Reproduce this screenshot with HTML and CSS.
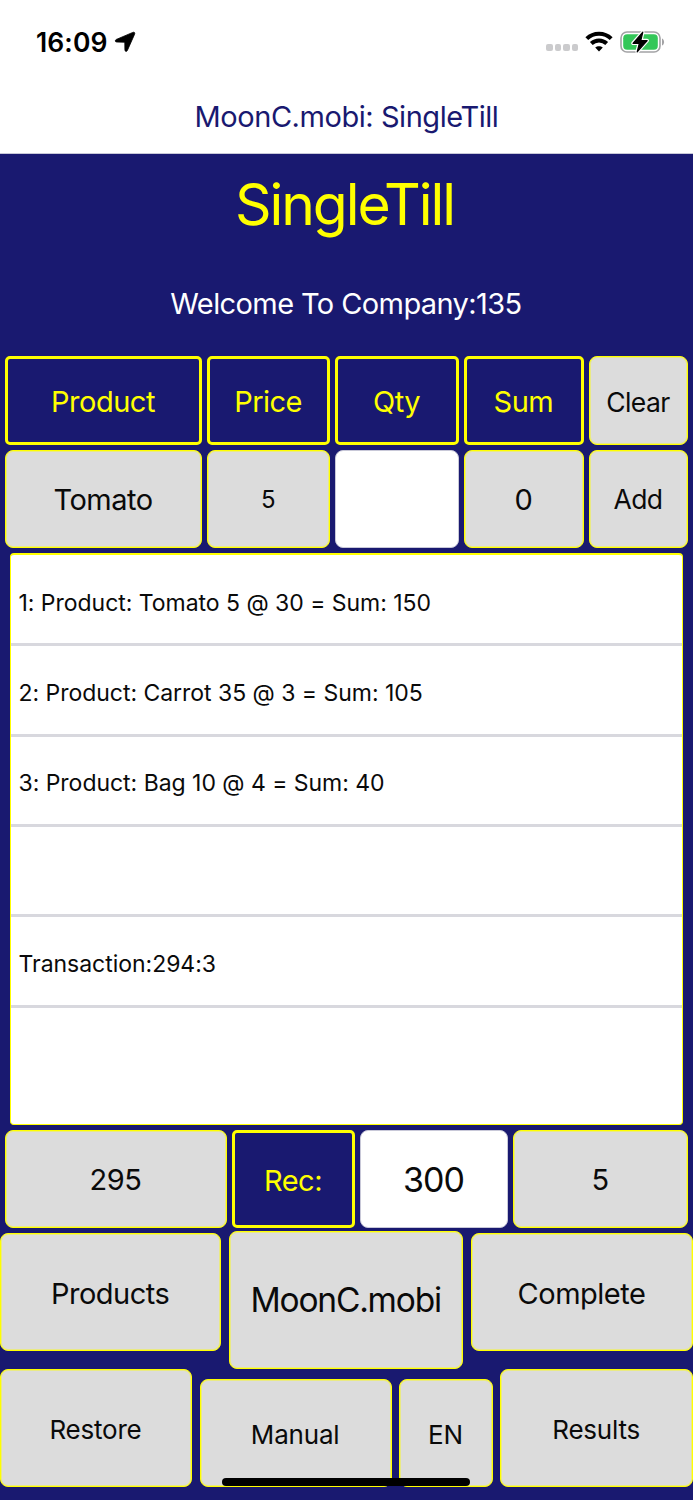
FILE: index.html
```html
<!DOCTYPE html>
<html lang="en">
	<head>
		<meta charset="utf-8">
		<title>MoonC.mobi: SingleTill</title>
		<link rel="stylesheet" href="styles.css">
	</head>
	<body>
		<div class="status">
			<span class="time">16:09</span>
			<svg class="arrow" width="22" height="22" viewBox="0 0 22 22">
				<path d="M18.8 1.4 L2.2 8.5 C0.8 9.3 1 10.9 2.6 11 L10 11.2 C10.5 11.2 10.8 11.5 10.8 12 L10.9 18.8 C11 20.8 12.6 21 13.4 19.4 L20.6 3.2 C21.2 1.6 20.2 0.8 18.8 1.4 Z" stroke="#000" stroke-width="0.8"/>
			</svg>
			<div class="dots"><i></i><i></i><i></i><i></i></div>
			<svg class="wifi" width="28" height="21" viewBox="0 0 28 21" fill="none" stroke="#000" stroke-width="4">
				<path d="M1.8 7.6 C8.5 1 19.5 1 26.2 7.6"/>
				<path d="M6.3 12.5 C10.6 8.4 17.4 8.4 21.7 12.5"/>
				<path d="M14 20.4 L10.2 16.6 C12.4 14.7 15.6 14.7 17.8 16.6 Z" fill="#000" stroke="none"/>
			</svg>
			<svg class="battery" width="46" height="24" viewBox="0 0 46 24">
				<rect x="1" y="2" width="39" height="20" rx="6" fill="#fff" stroke="#a3a3a5" stroke-width="1.6"/>
				<rect x="3.2" y="4.2" width="34.6" height="15.6" rx="4" fill="#34c759"/>
				<path d="M42 8.5 C44.8 9.5 44.8 14.5 42 15.5 Z" fill="#a3a3a5"/>
				<path d="M22.8 2.2 L13 13.3 H19.3 L17.2 21.8 L27.2 10.6 H20.8 Z" fill="#000" stroke="#fff" stroke-width="3.6" stroke-linejoin="round"/>
				<path d="M22.8 2.2 L13 13.3 H19.3 L17.2 21.8 L27.2 10.6 H20.8 Z" fill="#000" stroke="#000" stroke-width="1.2" stroke-linejoin="round"/>
			</svg>
		</div>
		<div class="navbar"><span class="nav-title">MoonC.mobi: SingleTill</span></div>
		<div class="till">
			<h1>SingleTill</h1>
			<p class="welcome">Welcome To Company:135</p>
			<div class="grid head">
				<div class="cell label">Product</div>
				<div class="cell label">Price</div>
				<div class="cell label">Qty</div>
				<div class="cell label">Sum</div>
				<div class="cell buton medium clear">Clear</div>
			</div>
			<div class="grid entry">
				<div class="cell buton">Tomato</div>
				<div class="cell buton small">5</div>
				<div class="cell field"></div>
				<div class="cell buton">0</div>
				<div class="cell buton medium">Add</div>
			</div>
			<div class="list">
				<div class="item">1: Product: Tomato 5 @ 30 = Sum: 150</div>
				<div class="item">2: Product: Carrot 35 @ 3 = Sum: 105</div>
				<div class="item">3: Product: Bag 10 @ 4 = Sum: 40</div>
				<div class="item"></div>
				<div class="item">Transaction:294:3</div>
			</div>
			<div class="grid totals">
				<div class="cell buton">295</div>
				<div class="cell label rec">Rec:</div>
				<div class="cell field">300</div>
				<div class="cell buton">5</div>
			</div>
			<div class="grid actions">
				<div class="cell buton">Products</div>
				<div class="cell buton main">MoonC.mobi</div>
				<div class="cell buton">Complete</div>
			</div>
			<div class="grid footer">
				<div class="cell buton tall">Restore</div>
				<div class="cell buton">Manual</div>
				<div class="cell buton">EN</div>
				<div class="cell buton tall">Results</div>
			</div>
		</div>
		<div class="home-bar"></div>
	</body>
</html>
```
FILE: styles.css
```css
* {
	box-sizing: border-box;
}
body {
	margin: 0;
	width: 693px;
	height: 1500px;
	position: relative;
	overflow: hidden;
	background-color: white;
	font-family: Inter, "Liberation Sans", sans-serif;
	font-size: 29px;
	letter-spacing: -0.5px;
	color: #0a0a0a;
}
.status {
	height: 80px;
	padding: 3px 27px 0 36px;
	display: flex;
	align-items: center;
}
.time {
	font-size: 26.5px;
	font-weight: 600;
	letter-spacing: 0.1px;
	color: black;
}
.arrow {
	margin-left: 6px;
}
.dots {
	margin-left: auto;
	padding-top: 12px;
	display: flex;
	gap: 2px;
}
.dots i {
	width: 6.5px;
	height: 6.5px;
	border-radius: 2px;
	background-color: #cbcbcd;
}
.wifi {
	margin-left: 7px;
}
.battery {
	margin-left: 7px;
}
.navbar {
	height: 74px;
	display: flex;
	justify-content: center;
	align-items: center;
	color: midnightblue;
	border-bottom: 1px solid #c8c8d8;
}
.nav-title {
	letter-spacing: -0.45px;
}
.till {
	height: 1346px;
	background-color: midnightblue;
}
h1 {
	margin: 0;
	height: 101px;
	padding-right: 4px;
	line-height: 101px;
	font-size: 57px;
	font-weight: 400;
	letter-spacing: -2.1px;
	text-align: center;
	color: yellow;
}
.welcome {
	margin: 0;
	height: 101px;
	padding-right: 1px;
	line-height: 98px;
	letter-spacing: -0.6px;
	text-align: center;
	color: white;
}
.grid {
	display: grid;
}
.cell {
	padding-right: 1px;
	display: flex;
	justify-content: center;
	align-items: center;
	border-radius: 8px;
}
.label {
	padding-top: 1px;
	border: 3px solid yellow;
	border-radius: 5px;
	color: yellow;
}
.rec {
	padding-top: 2px;
}
.buton {
	border: 1px solid yellow;
	box-shadow: inset 0 0 0 1px rgba(255, 255, 0, 0.4);
	background-color: gainsboro;
}
.field {
	border: 1px solid #c8c8d8;
	background-color: white;
	font-size: 34px;
	letter-spacing: -1px;
}
.medium {
	font-size: 26.5px;
	letter-spacing: -0.6px;
}
.small {
	font-size: 24px;
}
.head, .entry {
	padding: 0 5px;
	grid-template-columns: 197px 123.6px 123.6px 120.6px 99px;
	justify-content: space-between;
}
.head {
	height: 89px;
}
.clear {
	padding-top: 2px;
}
.entry {
	height: 98px;
	margin-top: 5px;
}
.list {
	height: 572px;
	margin: 5px 10px;
	padding-top: 1px;
	border: 1px solid yellow;
	border-top-width: 2px;
	border-radius: 4px;
	background-color: white;
	font-size: 23px;
	letter-spacing: -0.03px;
}
.item {
	height: 90.35px;
	padding: 6px 0 0 7.5px;
	display: flex;
	align-items: center;
	border-bottom: 3px solid #d8d8de;
}
.totals {
	height: 98px;
	padding: 0 5px;
	grid-template-columns: 222px 123px 148px 175px;
	justify-content: space-between;
}
.actions {
	height: 138px;
	margin-top: 3px;
	grid-template-columns: 221.4px 234px 222px;
	justify-content: space-between;
	align-items: start;
}
.actions .buton {
	height: 118px;
	margin-top: 2px;
	padding-top: 2px;
}
.actions .main {
	height: 138px;
	margin-top: 0;
	padding-top: 0;
	font-size: 33.5px;
	letter-spacing: -1.2px;
}
.footer {
	grid-template-columns: 192px 192px 93.5px 192.6px;
	justify-content: space-between;
	align-items: end;
	font-size: 26px;
	letter-spacing: -0.2px;
}
.footer .buton {
	height: 108px;
	padding-top: 2px;
}
.footer .tall {
	height: 118px;
}
.home-bar {
	position: absolute;
	left: 222px;
	top: 1478px;
	width: 248px;
	height: 8px;
	border-radius: 4px;
	background-color: black;
}
```
